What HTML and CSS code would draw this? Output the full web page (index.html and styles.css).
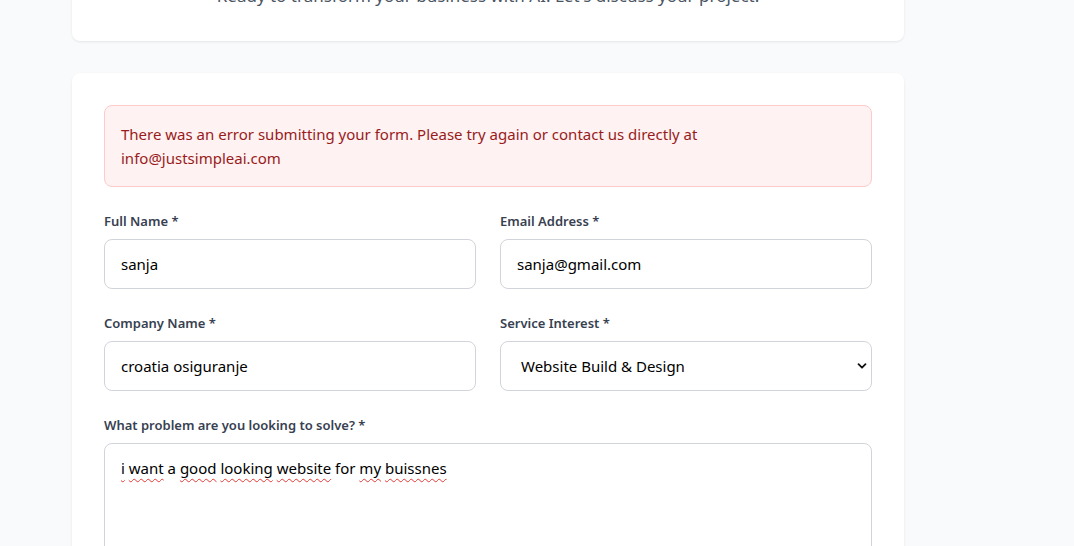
FILE: index.html
```html
<!DOCTYPE html>
<html lang="en">
<head>
<meta charset="utf-8">
<title>Contact</title>
<link rel="stylesheet" href="styles.css">
</head>
<body>
<main class="page">
  <section class="card intro">
    <p class="intro-text">Ready to transform your business with AI. Let's discuss your project.</p>
  </section>
  <section class="card form-card">
    <div class="alert">There was an error submitting your form. Please try again or contact us directly at info@justsimpleai.com</div>
    <form class="form">
      <div class="grid">
        <div class="field">
          <label class="label" for="name">Full Name *</label>
          <input class="input" id="name" type="text" value="sanja">
        </div>
        <div class="field">
          <label class="label" for="email">Email Address *</label>
          <input class="input" id="email" type="email" value="sanja@gmail.com">
        </div>
        <div class="field">
          <label class="label" for="company">Company Name *</label>
          <input class="input" id="company" type="text" value="croatia osiguranje">
        </div>
        <div class="field">
          <label class="label" for="service">Service Interest *</label>
          <div class="select-wrap">
            <select class="input select" id="service">
              <option>Website Build &amp; Design</option>
            </select>
            <svg class="chev" width="12" height="12" viewBox="0 0 12 12"><path d="M2.5 4.2 6 7.7 9.5 4.2" fill="none" stroke="#111" stroke-width="1.8" stroke-linecap="round" stroke-linejoin="round"/></svg>
          </div>
        </div>
      </div>
      <div class="field">
        <span class="label">What problem are you looking to solve? *</span>
        <div class="input textarea" role="textbox" aria-multiline="true"><span class="sp">i</span> <span class="sp">want</span> a <span class="sp">good</span> <span class="sp">looking</span> <span class="sp">website</span> for <span class="sp">my</span> <span class="sp">buissnes</span></div>
      </div>
    </form>
  </section>
</main>
</body>
</html>
```

FILE: styles.css
```css
* { box-sizing: border-box; }
html, body { margin: 0; padding: 0; }
body {
  background: #f9fafb;
  font-family: "Segoe UI", "Noto Sans", "Open Sans", sans-serif;
  color: #111827;
  overflow: hidden;
  height: 546px;
}
.page {
  width: 832px;
  margin-left: 72px;
  display: flex;
  flex-direction: column;
  gap: 32px;
  margin-top: -20px;
}
.card {
  background: #fff;
  border-radius: 8px;
  box-shadow: 0 1px 3px rgba(0,0,0,0.06), 0 1px 2px rgba(0,0,0,0.03);
}
.intro { padding: 0 32px 29px; }
.intro-text {
  margin: 0;
  text-align: center;
  font-size: 17px;
  line-height: 32px;
  color: #4b5563;
}
.form-card { padding: 32px; min-height: 600px; }
.alert {
  background: #fef2f2;
  border: 1px solid #fecaca;
  color: #991b1b;
  border-radius: 8px;
  padding: 16px;
  font-size: 15px;
  line-height: 24px;
  margin-bottom: 24px;
}
.form { display: flex; flex-direction: column; gap: 24px; }
.grid {
  display: grid;
  grid-template-columns: 1fr 1fr;
  column-gap: 24px;
  row-gap: 24px;
}
.field { display: flex; flex-direction: column; gap: 8px; }
.label {
  font-size: 13px;
  line-height: 20px;
  font-weight: 600;
  color: #374151;
}
.input {
  font-family: inherit;
  font-size: 15px;
  line-height: 24px;
  height: 50px;
  padding: 12px 16px;
  border: 1px solid #d1d5db;
  border-radius: 8px;
  background: #fff;
  color: #000;
  width: 100%;
  outline: none;
}
.select-wrap { position: relative; }
.select {
  appearance: none;
  -webkit-appearance: none;
  padding-left: 20px;
}
.chev { position: absolute; right: 4px; top: 19px; }
.textarea { height: 130px; }
.sp {
  text-decoration: underline wavy #e53935;
  text-decoration-thickness: 1px;
  text-underline-offset: 4px;
  text-decoration-skip-ink: none;
}
```
